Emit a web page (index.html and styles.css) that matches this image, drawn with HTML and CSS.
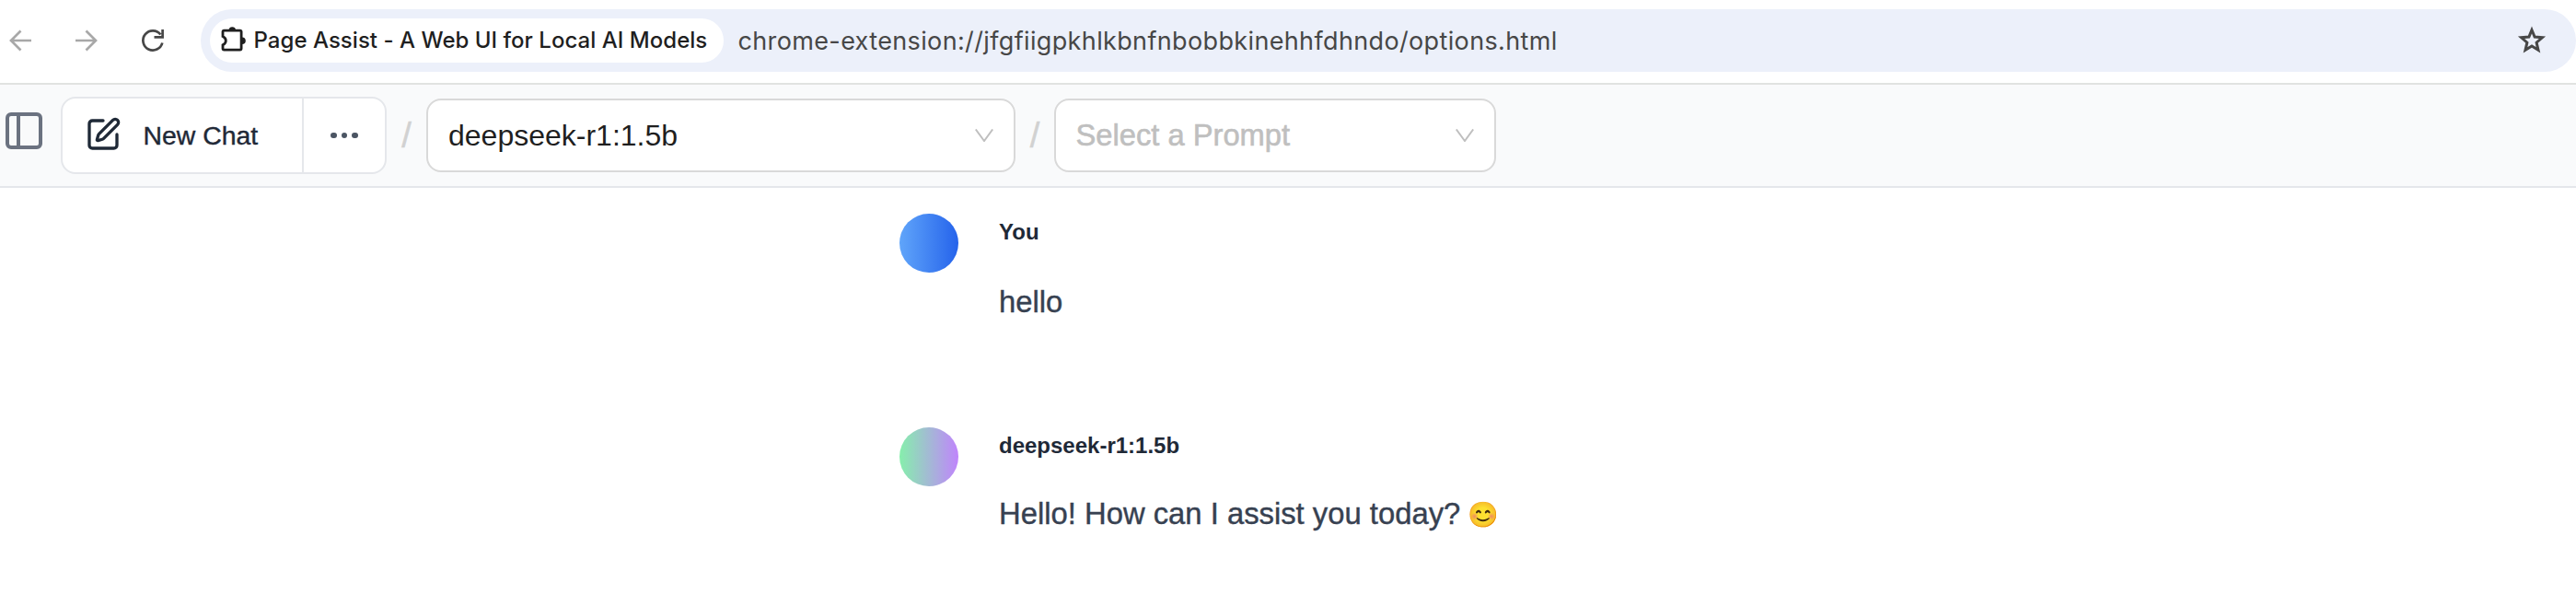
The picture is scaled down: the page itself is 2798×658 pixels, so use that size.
FILE: index.html
```
<!DOCTYPE html>
<html lang="en">
<head>
<meta charset="utf-8">
<title>Page Assist - A Web UI for Local AI Models</title>
<link rel="stylesheet" href="styles.css">
</head>
<body>
<header class="browser-bar">
  <nav class="nav-buttons">
    <svg class="nav-icon muted" viewBox="0 0 32 32"><path d="M28 16H6M16.500 5.500 6 16l10.500 10.500"/></svg>
    <svg class="nav-icon muted" viewBox="0 0 32 32"><path d="M4 16h22M15.500 5.500 26 16 15.500 26.500"/></svg>
    <svg class="nav-icon" viewBox="0 0 32 32"><path d="M26.300 18.500A10.600 10.600 0 1 1 24.400 9.500M26.600 4v8.300H17.500"/></svg>
  </nav>
  <div class="omnibox">
    <div class="site-chip">
      <svg class="puzzle" viewBox="0 0 30 30"><path d="M5.500 6.100H22.600q1.500 0 1.500 1.500V25.600q0 1.500-1.500 1.500H5.500q-1.500 0-1.500-1.500V21.800c2-1 3.300-2.500 3.300-4.600s-1.300-3.600-3.300-4.600V7.600q0-1.500 1.500-1.500z"/><path class="solid" d="M10.500 6a3.800 3.800 0 0 1 7.600 0zM25 13.400a3.800 3.800 0 0 1 0 7.600z"/></svg>
      <span class="chip-title">Page Assist - A Web UI for Local AI Models</span>
    </div>
    <span class="url">chrome-extension://jfgfiigpkhlkbnfnbobbkinehhfdhndo/options.html</span>
    <svg class="star" viewBox="0 0 32 32"><path d="M16 4.500 19.100 12.100 27.400 12.800 21.100 18.200 23 26.300 16 22 9 26.300 10.900 18.200 4.600 12.800 12.900 12.100Z"/></svg>
  </div>
</header>
<div class="toolbar">
  <svg class="sidebar-icon" viewBox="0 0 40 40"><rect x="2" y="2" width="36" height="36" rx="4"/><path d="M14 2v36"/></svg>
  <div class="chat-group">
    <button class="new-chat">
      <svg class="edit-icon" viewBox="0 0 24 24"><path d="M12 3H5a2 2 0 0 0-2 2v14a2 2 0 0 0 2 2h14a2 2 0 0 0 2-2v-7"/><path d="M18.375 2.625a1 1 0 0 1 3 3l-9.013 9.014a2 2 0 0 1-.853.505l-2.873.84a.5.5 0 0 1-.62-.62l.84-2.873a2 2 0 0 1 .506-.852z"/></svg>
      <span>New Chat</span>
    </button>
    <button class="more"><i></i><i></i><i></i></button>
  </div>
  <span class="slash">/</span>
  <div class="select model"><span>deepseek-r1:1.5b</span><svg class="chevron" viewBox="0 0 20 14"><path d="M.8.500 10 13 19.200.500"/></svg></div>
  <span class="slash second">/</span>
  <div class="select prompt"><span>Select a Prompt</span><svg class="chevron" viewBox="0 0 20 14"><path d="M.8.500 10 13 19.200.500"/></svg></div>
</div>
<main class="conversation">
  <article class="message user">
    <div class="avatar"></div>
    <div class="body"><h2>You</h2><p>hello</p></div>
  </article>
  <article class="message bot">
    <div class="avatar"></div>
    <div class="body"><h2>deepseek-r1:1.5b</h2><p>Hello! How can I assist you today? <span class="emoji">😊</span></p></div>
  </article>
</main>
</body>
</html>
```
FILE: styles.css
```
* { box-sizing: border-box; }
body { margin: 0; width: 2798px; height: 658px; overflow: hidden; background: #fff; font-family: "Liberation Sans", Arial, sans-serif; }
svg { display: block; flex: none; fill: none; }
.browser-bar { height: 92px; padding: 10px 0 12px 6px; display: flex; border-bottom: 2px solid #e1e3e1; }
.nav-buttons { display: flex; align-items: center; gap: 40px; width: 212px; flex: none; height: 68px; }
.nav-icon { width: 32px; height: 32px; stroke: #474747; stroke-width: 2.7; }
.nav-icon.muted { stroke: #a8a8a8; }
.omnibox { flex: 1; height: 68px; border-radius: 34px; background: #ecf0fa; display: flex; align-items: center; padding: 0 32px 0 10px; }
.site-chip { width: 558px; height: 48px; border-radius: 24px; background: #fff; display: flex; align-items: center; padding-left: 10px; margin-right: 15.5px; flex: none; }
.puzzle { width: 30px; height: 30px; margin: -2px 7.5px 0 0; transform: translateY(-1px); stroke: #1f1f1f; stroke-width: 2.8; }
.puzzle .solid { fill: #1f1f1f; stroke: none; }
.chip-title { font: 500 24px/36px Inter, sans-serif; letter-spacing: .03px; color: #1f1f1f; white-space: nowrap; }
.url { flex: 1; font: 400 27px/37px Inter, sans-serif; letter-spacing: .36px; color: #474747; white-space: nowrap; }
.star { width: 32px; height: 32px; stroke: #474747; stroke-width: 3; }
.toolbar { height: 112px; background: #f9fafb; border-bottom: 2px solid #e5e7eb; display: flex; align-items: center; padding-left: 6px; }
.sidebar-icon { width: 40px; height: 40px; margin: -6px 20px 0 0; stroke: #6b7280; stroke-width: 4; transform: translateY(-2px); }
.chat-group { width: 354px; height: 84px; border: 2px solid #e5e7eb; border-radius: 16px; background: #fff; display: flex; }
button { border: 0; background: none; padding: 0; display: flex; align-items: center; }
.new-chat { width: 262px; border-right: 2px solid #e5e7eb; padding-left: 24px; gap: 23.5px; font: 28.4px "Liberation Sans", Arial, sans-serif; color: #1f2937; -webkit-text-stroke: .4px #1f2937; }
.edit-icon { width: 40px; height: 40px; margin-top: -6px; stroke: #1f2937; stroke-width: 2; stroke-linecap: round; stroke-linejoin: round; transform: translateY(2px); }
.more { flex: 1; gap: 5px; justify-content: center; }
.more i { width: 6.6px; height: 6.6px; border-radius: 50%; background: #4b5563; }
.slash { width: 43px; text-align: center; font-size: 38px; line-height: 42px; color: #d1d1d1; -webkit-text-stroke: .5px #d1d1d1; }
.slash.second { width: 42px; }
.select { height: 80px; border: 2px solid #d9d9d9; border-radius: 16px; background: #fff; display: flex; align-items: center; justify-content: space-between; padding: 0 22px; font-size: 32px; line-height: 38px; color: #1f1f1f; }
.model { width: 640px; }
.prompt { width: 480px; padding-left: 21.5px; font-size: 32.7px; color: #bfbfbf; -webkit-text-stroke: .6px #bfbfbf; }
.chevron { width: 20px; height: 14px; stroke: #bfbfbf; stroke-width: 2; }
.conversation { padding: 28px 0 0 977px; }
.message { display: flex; gap: 44px; height: 232px; }
.bot { height: 180px; }
.avatar { width: 64px; height: 64px; border-radius: 50%; flex: none; background: linear-gradient(to right, #60a5fa, #2563eb); }
.bot .avatar { background: linear-gradient(to right, #86efac, #c084fc); }
h2 { margin: 4px 0 0; font-size: 24px; line-height: 32px; color: #1f2937; }
p { margin: 32px 0 0; font-size: 32.8px; line-height: 56px; color: #374151; white-space: nowrap; -webkit-text-stroke: .4px #374151; }
.bot p { margin-top: 30px; }
.emoji { font-size: 27px; line-height: 1; vertical-align: 1.5px; margin-left: -1px; -webkit-text-stroke: 0; }
```
